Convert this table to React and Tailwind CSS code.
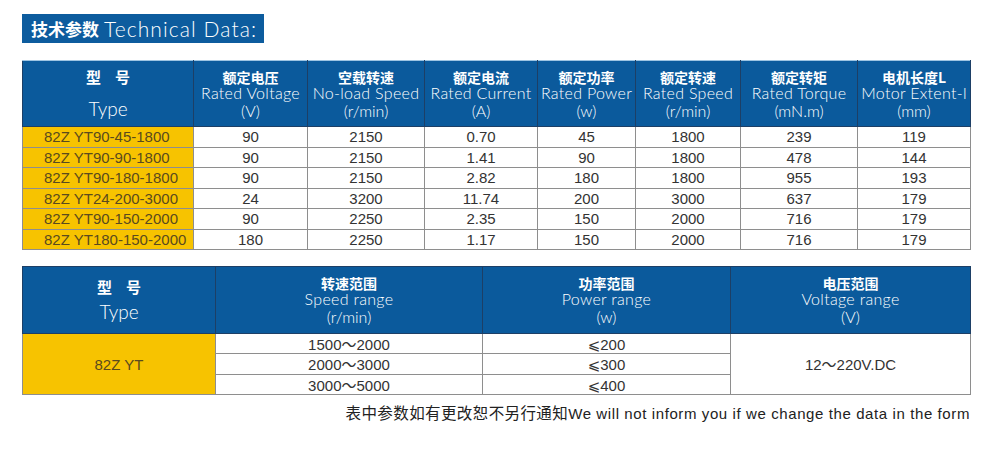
import React from 'react';

const CN = '"Noto Sans CJK SC", "Liberation Sans", sans-serif';
const EN = 'Lato, "Liberation Sans", sans-serif';
const SYM = '"Noto Sans CJK SC", "DejaVu Sans", sans-serif';

const heads = [
  ['额定电压', 'Rated Voltage', '(V)'],
  ['空载转速', 'No-load Speed', '(r/min)'],
  ['额定电流', 'Rated Current', '(A)'],
  ['额定功率', 'Rated Power', '(w)'],
  ['额定转速', 'Rated Speed', '(r/min)'],
  ['额定转矩', 'Rated Torque', '(mN.m)'],
  ['电机长度L', 'Motor Extent-l', '(mm)'],
];

const rows = [
  ['82Z YT90-45-1800', '90', '2150', '0.70', '45', '1800', '239', '119'],
  ['82Z YT90-90-1800', '90', '2150', '1.41', '90', '1800', '478', '144'],
  ['82Z YT90-180-1800', '90', '2150', '2.82', '180', '1800', '955', '193'],
  ['82Z YT24-200-3000', '24', '3200', '11.74', '200', '3000', '637', '179'],
  ['82Z YT90-150-2000', '90', '2250', '2.35', '150', '2000', '716', '179'],
  ['82Z YT180-150-2000', '180', '2250', '1.17', '150', '2000', '716', '179'],
];

const widths = [171, 114, 117, 113, 98, 105, 117, 113];

function Head({ cn, en, unit }) {
  return (
    <div className="flex flex-col items-center text-white">
      <span className="h-[16px] leading-[16px] text-[14px] font-bold" style={{ fontFamily: CN }}>{cn}</span>
      <span className="h-[16px] leading-[16px] text-[16px] font-light tracking-[0.3px] whitespace-nowrap" style={{ fontFamily: EN }}>{en}</span>
      <span className="mt-[2px] h-[16px] leading-[16px] text-[16px] font-light" style={{ fontFamily: EN }}>{unit}</span>
    </div>
  );
}

function TypeHead({ gap }) {
  return (
    <div className="flex flex-col items-center text-white">
      <span className="h-[18px] leading-[18px] text-[15px] font-bold tracking-[14px] pl-[14px]" style={{ fontFamily: CN }}>型号</span>
      <span className={`${gap} h-[20px] leading-[20px] text-[19px] font-light`} style={{ fontFamily: EN }}>Type</span>
    </div>
  );
}

function Tilde() {
  return <span style={{ fontFamily: SYM }}>～</span>;
}

function Le() {
  return <span style={{ fontFamily: SYM }}>⩽</span>;
}

export default function App() {
  return (
    <div className="w-[996px] h-[457px] bg-white" style={{ fontFamily: '"Liberation Sans", Arial, sans-serif' }}>
      <div className="pt-[14px] pl-[22px]">
        <div className="w-[242px] h-[29px] bg-[#0d5c9e] flex items-center pl-[9px] text-white leading-none">
          <span className="text-[17px] font-bold" style={{ fontFamily: CN }}>技术参数</span>
          <span className="ml-[5px] text-[21px] font-light tracking-[1.1px]" style={{ fontFamily: EN }}>Technical Data:</span>
        </div>
      </div>

      <table className="ml-[22px] mt-[17px] table-fixed border-collapse text-[15px] text-[#333]" style={{ width: 948 }}>
        <colgroup>
          {widths.map((w, i) => <col key={i} style={{ width: w }} />)}
        </colgroup>
        <thead>
          <tr className="h-[66px] bg-[#0b5a9c]">
            <th className="border border-[#1d3f66] border-t-[#9ec4e2] font-normal p-0"><TypeHead gap="mt-[13px]" /></th>
            {heads.map((h, i) => (
              <th key={i} className="border border-[#1d3f66] border-t-[#9ec4e2] font-normal p-0"><Head cn={h[0]} en={h[1]} unit={h[2]} /></th>
            ))}
          </tr>
        </thead>
        <tbody>
          {rows.map((r, i) => (
            <tr key={i} className="h-[20.5px] leading-none">
              {r.map((c, j) => (
                <td key={j} className={`border border-[#8e8e8e] p-0 ${j === 0 ? 'bg-[#f7c300] pl-[21px] text-left text-[#5a4a1e]' : 'text-center'}`}>{c}</td>
              ))}
            </tr>
          ))}
        </tbody>
      </table>

      <table className="ml-[22px] mt-[16px] table-fixed border-collapse text-[15px] text-[#333]" style={{ width: 948 }}>
        <colgroup>
          <col style={{ width: 193 }} />
          <col style={{ width: 267 }} />
          <col style={{ width: 248 }} />
          <col style={{ width: 240 }} />
        </colgroup>
        <thead>
          <tr className="h-[67px] bg-[#0b5a9c]">
            <th className="border border-[#1d3f66] font-normal p-0"><TypeHead gap="mt-[6px]" /></th>
            <th className="border border-[#1d3f66] font-normal p-0"><Head cn="转速范围" en="Speed range" unit="(r/min)" /></th>
            <th className="border border-[#1d3f66] font-normal p-0"><Head cn="功率范围" en="Power range" unit="(w)" /></th>
            <th className="border border-[#1d3f66] font-normal p-0"><Head cn="电压范围" en="Voltage range" unit="(V)" /></th>
          </tr>
        </thead>
        <tbody>
          <tr className="h-[20px] leading-none">
            <td rowSpan={3} className="border border-[#8e8e8e] bg-[#f7c300] text-center text-[#5a4a1e]">82Z YT</td>
            <td className="border border-[#8e8e8e] text-center">1500<Tilde />2000</td>
            <td className="border border-[#8e8e8e] text-center"><Le />200</td>
            <td rowSpan={3} className="border border-[#8e8e8e] text-center">12<Tilde />220V.DC</td>
          </tr>
          <tr className="h-[21px] leading-none">
            <td className="border border-[#8e8e8e] text-center">2000<Tilde />3000</td>
            <td className="border border-[#8e8e8e] text-center"><Le />300</td>
          </tr>
          <tr className="h-[20px] leading-none">
            <td className="border border-[#8e8e8e] text-center">3000<Tilde />5000</td>
            <td className="border border-[#8e8e8e] text-center"><Le />400</td>
          </tr>
        </tbody>
      </table>

      <div className="mt-[10px] pr-[26px] text-right text-[#222] leading-none whitespace-nowrap">
        <span className="text-[15.5px] tracking-[0.4px]" style={{ fontFamily: CN }}>表中参数如有更改恕不另行通知</span>
        <span className="text-[15px] tracking-[0.6px]" style={{ fontFamily: '"Liberation Sans", sans-serif' }}>We will not inform you if we change the data in the form</span>
      </div>
    </div>
  );
}
